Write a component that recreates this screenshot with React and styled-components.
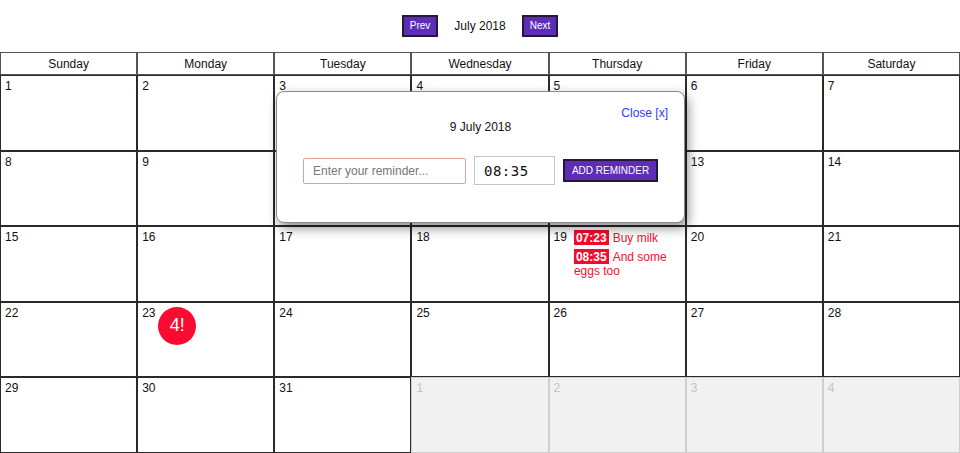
import React from "react";
import styled, { createGlobalStyle } from "styled-components";

const GlobalStyle = createGlobalStyle`
  html, body {
    margin: 0;
    padding: 0;
    background: #fff;
    font-family: "Liberation Sans", Arial, sans-serif;
    font-size: 12px;
    color: #111;
  }
  * {
    box-sizing: border-box;
  }
`;

const Page = styled.div`
  position: relative;
  width: 960px;
  height: 453px;
  overflow: hidden;
`;

const Nav = styled.div`
  height: 52px;
  display: flex;
  align-items: center;
  justify-content: center;
  gap: 16px;
  padding-bottom: 1px;
`;

const NavButton = styled.button`
  height: 22px;
  padding: 0 6px;
  background: #5d2db5;
  color: #fff;
  border: 2px solid #231a3a;
  font-family: "Liberation Sans", Arial, sans-serif;
  font-size: 10px;
  cursor: pointer;
`;

const Month = styled.span`
  font-size: 12px;
  color: #111;
`;

const Grid = styled.div`
  display: grid;
  grid-template-columns: repeat(7, 1fr);
  grid-template-rows: 23px repeat(5, 1fr);
  height: 401px;
`;

const HeadCell = styled.div`
  border: 1px solid #555;
  display: flex;
  align-items: center;
  justify-content: center;
  font-size: 12px;
  color: #111;
`;

const DayCell = styled.div`
  position: relative;
  border: 1px solid ${(p) => (p.$muted ? "#cfcfcf" : "#2a2a2a")};
  background: ${(p) => (p.$muted ? "#f1f1f1" : "#fff")};
  padding: 3px 4px;
  display: flex;
  gap: 7px;
  align-items: flex-start;
  font-size: 12px;
`;

const DayNum = styled.span`
  color: ${(p) => (p.$muted ? "#c4c4c4" : "#111")};
  line-height: 14px;
`;

const ReminderList = styled.div`
  display: flex;
  flex-direction: column;
  gap: 4px;
  margin-top: 0;
`;

const Reminder = styled.div`
  color: #f5102f;
  font-size: 12px;
  line-height: 14px;
`;

const Time = styled.span`
  display: inline-block;
  background: #f50a2e;
  color: #fff;
  font-weight: bold;
  font-size: 12px;
  padding: 1px 2px 0;
  margin-right: 4px;
  line-height: 14px;
`;

const CountBadge = styled.div`
  position: absolute;
  left: 20px;
  top: 4px;
  width: 38px;
  height: 38px;
  border-radius: 50%;
  background: #fb0a32;
  color: #fff;
  font-size: 18px;
  display: flex;
  align-items: center;
  justify-content: center;
`;

const Modal = styled.div`
  position: absolute;
  left: 276px;
  top: 91px;
  width: 409px;
  height: 132px;
  background: #fff;
  border: 1px solid #8a8a8a;
  border-radius: 8px;
  box-shadow: 3px 5px 12px rgba(0, 0, 0, 0.45);
  padding: 13px 16px 0 26px;
  display: flex;
  flex-direction: column;
`;

const CloseLink = styled.a`
  align-self: flex-end;
  color: #2a3cff;
  font-size: 12px;
  text-decoration: none;
  line-height: 16px;
  cursor: pointer;
`;

const ModalDate = styled.div`
  text-align: center;
  font-size: 12px;
  line-height: 16px;
  margin-top: -2px;
  padding-right: 10px;
`;

const Form = styled.div`
  display: flex;
  align-items: center;
  gap: 8px;
  margin-top: 21px;
`;

const TextInput = styled.input`
  width: 163px;
  height: 26px;
  border: 1px solid #e4a092;
  border-radius: 2px;
  padding: 0 9px;
  font-family: "Liberation Sans", Arial, sans-serif;
  font-size: 12px;
  color: #333;
  outline: none;
  &::placeholder {
    color: #777;
  }
`;

const TimeInput = styled.input`
  width: 81px;
  height: 29px;
  border: 1px solid #c4c4c4;
  padding: 0 9px;
  font-family: "DejaVu Sans Mono", monospace;
  font-size: 14px;
  letter-spacing: 0.5px;
  color: #111;
  outline: none;
`;

const AddButton = styled.button`
  height: 23px;
  width: 95px;
  padding: 0;
  background: #5d2db5;
  color: #fff;
  border: 2px solid #231a3a;
  font-family: "Liberation Sans", Arial, sans-serif;
  font-size: 10px;
  cursor: pointer;
`;

const days = ["Sunday", "Monday", "Tuesday", "Wednesday", "Thursday", "Friday", "Saturday"];

const cells = [];
for (let d = 1; d <= 31; d++) cells.push({ n: d, muted: false });
for (let d = 1; d <= 4; d++) cells.push({ n: d, muted: true });

const reminders = {
  19: [
    { time: "07:23", text: "Buy milk" },
    { time: "08:35", text: "And some eggs too" },
  ],
};

export default function App() {
  return (
    <Page>
      <GlobalStyle />
      <Nav>
        <NavButton>Prev</NavButton>
        <Month>July 2018</Month>
        <NavButton>Next</NavButton>
      </Nav>
      <Grid>
        {days.map((d) => (
          <HeadCell key={d}>{d}</HeadCell>
        ))}
        {cells.map((c, i) => (
          <DayCell key={i} $muted={c.muted}>
            <DayNum $muted={c.muted}>{c.n}</DayNum>
            {!c.muted && reminders[c.n] && (
              <ReminderList>
                {reminders[c.n].map((r) => (
                  <Reminder key={r.time}>
                    <Time>{r.time}</Time>
                    {r.text}
                  </Reminder>
                ))}
              </ReminderList>
            )}
            {!c.muted && c.n === 23 && <CountBadge>4!</CountBadge>}
          </DayCell>
        ))}
      </Grid>
      <Modal>
        <CloseLink>Close [x]</CloseLink>
        <ModalDate>9 July 2018</ModalDate>
        <Form>
          <TextInput placeholder="Enter your reminder..." />
          <TimeInput defaultValue="08:35" />
          <AddButton>ADD REMINDER</AddButton>
        </Form>
      </Modal>
    </Page>
  );
}
